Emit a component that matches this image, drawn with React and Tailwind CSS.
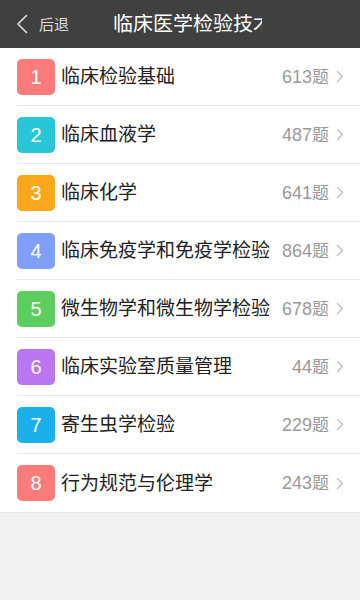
const subjects = [
  { n: 1, name: "临床检验基础", count: 613, color: "bg-[#fc7b7b]" },
  { n: 2, name: "临床血液学", count: 487, color: "bg-[#29c6d8]" },
  { n: 3, name: "临床化学", count: 641, color: "bg-[#fba71b]" },
  { n: 4, name: "临床免疫学和免疫学检验", count: 864, color: "bg-[#7f9ffb]" },
  { n: 5, name: "微生物学和微生物学检验", count: 678, color: "bg-[#5ccd5f]" },
  { n: 6, name: "临床实验室质量管理", count: 44, color: "bg-[#bb77f2]" },
  { n: 7, name: "寄生虫学检验", count: 229, color: "bg-[#1cb0ea]" },
  { n: 8, name: "行为规范与伦理学", count: 243, color: "bg-[#fc7b7b]" },
];

export default function App() {
  return (
    <div
      className="w-[360px] h-[600px] bg-[#f2f2f2] overflow-hidden"
      style={{ fontFamily: '"Liberation Sans", "Noto Sans CJK SC", sans-serif' }}
    >
      {/* header */}
      <div className="h-[48px] bg-[#404040] flex items-center">
        <div className="flex items-center pl-[16px] w-[113px]">
          <svg width="12" height="20" viewBox="0 0 12 20" fill="none">
            <path d="M10.5 1.5L2 10l8.5 8.5" stroke="#e0e0e0" strokeWidth="1.6" strokeLinecap="round" strokeLinejoin="round" />
          </svg>
          <span className="ml-[11px] text-[15px] text-[#dcdcdc] leading-none">后退</span>
        </div>
        <div className="w-[149px] overflow-hidden whitespace-nowrap text-[20px] text-white leading-none">
          临床医学检验技术
        </div>
      </div>

      {/* list */}
      <div className="bg-white border-b border-[#e6e6e6]">
        {subjects.map((s, i) => (
          <div key={s.n} className="pl-[17px]">
            <div
              className={`h-[58px] flex items-center pr-[16px] ${i < subjects.length - 1 ? "border-b border-[#e6e6e6]" : ""}`}
            >
              <div className={`w-[38px] h-[36px] rounded-[5px] ${s.color} flex items-center justify-center text-white text-[20px] leading-none shrink-0`}>
                {s.n}
              </div>
              <div className="ml-[6px] flex-1 text-[19px] text-[#222] leading-none whitespace-nowrap">{s.name}</div>
              <div className="text-[18px] text-[#9a9a9a] leading-none whitespace-nowrap">{s.count}<span className="text-[17px]">题</span></div>
              <svg className="ml-[7px]" width="8" height="13" viewBox="0 0 8 13" fill="none">
                <path d="M1.5 1.5l5 5-5 5" stroke="#c4c4c4" strokeWidth="1.6" strokeLinecap="round" strokeLinejoin="round" />
              </svg>
            </div>
          </div>
        ))}
      </div>
    </div>
  );
}
